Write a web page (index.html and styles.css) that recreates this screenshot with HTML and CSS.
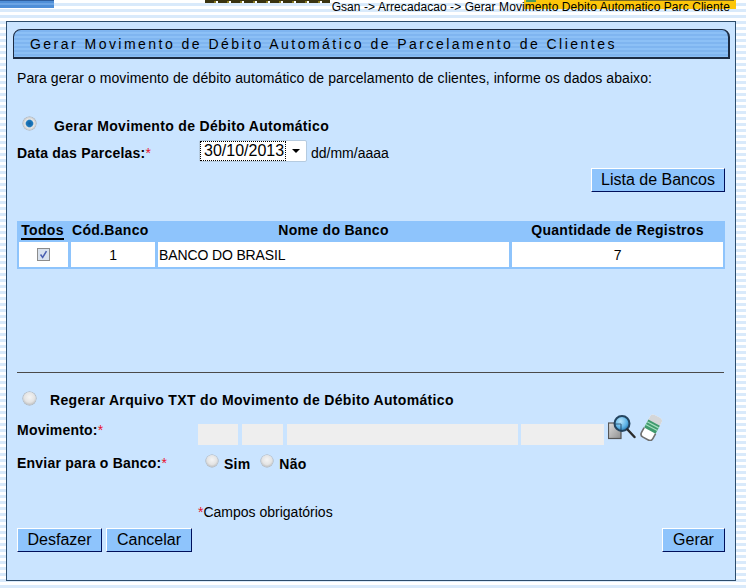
FILE: index.html
```html
<!DOCTYPE html>
<html lang="pt-BR">
<head>
<meta charset="utf-8">
<title>Gerar Movimento de Débito Automático</title>
<link rel="stylesheet" href="styles.css">
</head>
<body>
<header class="top">
  <div class="top-blue"></div>
  <div class="top-logo"></div>
  <div class="top-yellow"><span class="top-green"></span><span class="top-scribble"></span></div>
  <div class="crumb">Gsan -&gt; Arrecadacao -&gt; Gerar Movimento Debito Automatico Parc Cliente</div>
</header>
<main class="panel">
  <h1 class="title">Gerar Movimento de Débito Automático de Parcelamento de Clientes</h1>
  <p class="intro">Para gerar o movimento de débito automático de parcelamento de clientes, informe os dados abaixo:</p>

  <div class="option option-first">
    <input class="radio" type="radio" name="modo" checked>
    <strong>Gerar Movimento de Débito Automático</strong>
  </div>
  <div class="date-row">
    <label class="lbl">Data das Parcelas:<span class="req">*</span></label>
    <div class="select"><span class="select-value">30/10/2013</span><span class="caret"></span></div>
    <span class="hint">dd/mm/aaaa</span>
  </div>
  <div class="list-row"><button class="btn btn-list" type="button">Lista de Bancos</button></div>

  <div class="grid">
    <div class="th th-todos"><span class="todos">Todos</span></div>
    <div class="th th-cod">Cód.Banco</div>
    <div class="th">Nome do Banco</div>
    <div class="th">Quantidade de Registros</div>
    <div class="td td-c"><span class="check"><svg width="13" height="13" viewBox="0 0 13 13"><path d="M3 6.5 5.5 10 10 2.5" fill="none" stroke="#4a5fb0" stroke-width="1.8"/></svg></span></div>
    <div class="td td-c">1</div>
    <div class="td">BANCO DO BRASIL</div>
    <div class="td td-c">7</div>
  </div>

  <hr class="rule">

  <div class="option option-second">
    <input class="radio" type="radio" name="modo">
    <strong>Regerar Arquivo TXT do Movimento de Débito Automático</strong>
  </div>
  <div class="mov-row">
    <label class="lbl lbl-mov">Movimento:<span class="req">*</span></label>
    <div class="fields">
      <span class="field f1"></span><span class="field f2"></span><span class="field f3"></span><span class="field f4"></span>
    </div>
    <svg class="icon-search" width="28" height="26" viewBox="0 0 28 26">
      <defs><radialGradient id="lens" cx=".4" cy=".35" r=".7"><stop offset="0" stop-color="#b8e4fa"/><stop offset=".6" stop-color="#5fb4e6"/><stop offset="1" stop-color="#1f6fa8"/></radialGradient>
      <linearGradient id="page" x1="0" y1="0" x2="1" y2="1"><stop offset="0" stop-color="#ddd"/><stop offset="1" stop-color="#8f8f8f"/></linearGradient></defs>
      <rect x="0.5" y="9" width="12.5" height="15.5" fill="url(#page)" stroke="#555" stroke-width="1.2"/>
      <circle cx="14" cy="9.5" r="7.5" fill="url(#lens)" stroke="#24445f" stroke-width="2"/>
      <path d="M13 10 V17 M7 10 H13" stroke="#1d3c58" stroke-width="1.2" opacity=".7"/>
      <path d="M19.5 15.5 26.5 23" stroke="#2b2b2b" stroke-width="2.4" stroke-linecap="round"/>
    </svg>
    <svg class="icon-eraser" width="25" height="27" viewBox="0 0 25 27">
      <g transform="rotate(28 12.5 13.5)">
        <rect x="6" y="1" width="13" height="25" rx="3.5" fill="#fff"/>
        <path d="M6 9V4.5Q6 1 9.5 1h6Q19 1 19 4.5V9Z" fill="#d4d6d8"/>
        <rect x="6" y="8" width="13" height="9" fill="#3f9a6e"/>
        <path d="M6 10.5H19M6 13.5H19" stroke="#a6e0bf" stroke-width="1.2"/>
        <path d="M6 17V22.5Q6 26 9.5 26h6Q19 26 19 22.5V17" fill="none" stroke="#6f6f6f" stroke-width="1.6"/>
      </g>
    </svg>
  </div>
  <div class="send-row">
    <label class="lbl lbl-send">Enviar para o Banco:<span class="req">*</span></label>
    <input class="radio radio-sm" type="radio" name="env"><strong class="opt-sim">Sim</strong>
    <input class="radio radio-sm" type="radio" name="env"><strong>Não</strong>
  </div>
  <p class="required"><span class="req">*</span>Campos obrigatórios</p>
  <div class="actions">
    <button class="btn btn-undo" type="button">Desfazer</button>
    <button class="btn btn-cancel" type="button">Cancelar</button>
    <button class="btn btn-end" type="button">Gerar</button>
  </div>
</main>
</body>
</html>
```
FILE: styles.css
```css
* { box-sizing: border-box; }
html, body { margin: 0; padding: 0; }
body {
  width: 746px;
  height: 588px;
  overflow: hidden;
  font-family: "Liberation Sans", Arial, sans-serif;
  font-size: 14px;
  color: #000;
  background: repeating-linear-gradient(to bottom, #fff 0, #fff 3px, #d9eafb 3px, #d9eafb 6px);
}
.top { position: relative; height: 21px; }
.top-blue { position: absolute; left: 0; top: 0; width: 54px; height: 8px; background: linear-gradient(to bottom, #2f5f9f 0, #2f5f9f 1px, #4f8fd8 1px, #4f8fd8 3px, #6ba4e4 3px, #6ba4e4 5px, #4f8fd8 5px); }
.top-logo { position: absolute; left: 205px; top: 0; width: 125px; height: 3px; background: repeating-linear-gradient(to right, #3a3310 0, #3a3310 9px, #8a7a20 9px, #8a7a20 11px, transparent 11px, transparent 13px); border-top: 1px solid #3a3310; }
.top-yellow { position: absolute; left: 524px; top: 0; width: 212px; height: 9px; background: #fdc60a; }
.top-green { position: absolute; left: 2px; top: 0; width: 10px; height: 2px; background: #4f9a5a; }
.top-scribble { position: absolute; left: 66px; top: 0; width: 144px; height: 1px; background: #7c6a20; }
.crumb { position: absolute; right: 16px; top: 1px; font-size: 12px; line-height: 12px; letter-spacing: .07px; white-space: nowrap; }
.panel {
  margin-left: 6px;
  width: 730px;
  height: 560px;
  background: #cae4ff;
  border: 1px solid #2c4c6c;
  padding: 7px 10px 0 10px;
}
.title {
  margin: 0 0 0 -4px;
  width: 717px;
  height: 30px;
  padding-left: 16px;
  font-size: 14px;
  font-weight: normal;
  line-height: 29px;
  letter-spacing: 2.47px;
  color: #000;
  border: 1px solid #1c2c44;
  border-width: 1px 2px 2px 1px;
  border-radius: 8px 8px 0 0;
  background: repeating-linear-gradient(to bottom, #7fb5f0 0, #7fb5f0 2px, #8cc0f6 2px, #8cc0f6 4px);
}
.intro { margin: 11px 0 0 0; line-height: 16px; letter-spacing: .08px; }
.option { display: flex; align-items: center; font-weight: bold; letter-spacing: .33px; }
.option-first { margin: 30px 0 0 6px; height: 20px; }
.option-first strong { margin-left: 18px; }
.option-first .radio { margin-top: -6px; }
.radio {
  appearance: none;
  flex: none;
  margin: 0;
  width: 13px;
  height: 13px;
  border-radius: 50%;
  background: radial-gradient(circle at 50% 40%, #f4f4f4 0, #e4e4e4 50%, #9f9f9f 100%);
  box-shadow: 0 0 0 .5px #aaa;
}
.radio:checked { background: radial-gradient(circle, #125f9f 0, #1b78bd 34%, #e8e8e8 48%, #a0a0a0 100%); }
.date-row { display: flex; align-items: center; margin-top: 6px; height: 22px; }
.lbl { font-weight: bold; letter-spacing: .22px; }
.date-row .lbl { width: 182px; }
.req { color: #e8132c; font-weight: normal; }
.select {
  display: flex;
  align-items: center;
  align-self: flex-start;
  width: 108px;
  height: 22px;
  margin-top: -2px;
  padding: 1px;
  background: #fff;
  border-radius: 2px;
  border: 1px solid #b5cbe0;
}
.select-value { font-size: 16px; line-height: 18px; padding: 0 1px 0 3px; outline: 1px dotted #000; width: 84px; }
.caret { margin-left: 7px; border: 4px solid transparent; border-top: 4px solid #000; border-bottom: 0; }
.hint { margin-left: 4px; font-size: 14px; }
.list-row { display: flex; justify-content: flex-end; margin-top: 4px; }
.btn {
  height: 24px;
  padding: 0;
  margin: 0;
  font-family: inherit;
  font-size: 16px;
  line-height: 20px;
  white-space: nowrap;
  color: #000;
  background: #8ec4fc;
  border: 1px solid;
  border-color: #fff #00105c #00105c #fff;
}
.btn-list { width: 134px; }
.btn-undo { width: 85px; }
.btn-cancel { width: 86px; }
.grid {
  display: grid;
  grid-template-columns: 49px 84px 351px 211px;
  column-gap: 3px;
  row-gap: 1px;
  width: 708px;
  margin: 29px 0 0 0;
  padding: 0 2px 2px;
  background: #8ec4fc;
}
.th { height: 20px; line-height: 19px; font-weight: bold; text-align: center; letter-spacing: .3px; }
.th-todos { padding-right: 2px; }
.th-cod { text-align: left; padding-left: 1px; }
.todos { border-bottom: 2px solid #000; display: inline-block; line-height: 16px; }
.td { height: 25px; line-height: 25px; background: #fff; padding: 1px 0 0 1px; letter-spacing: -.13px; }
.td-c { text-align: center; padding: 1px 0 0 0; display: flex; align-items: center; justify-content: center; }
.check { width: 13px; height: 13px; margin-top: -1px; border: 1px solid #8c8c8c; background: #d9e2ee; display: flex; align-items: center; justify-content: center; }
.rule { margin: 103px 0 0 0; width: 707px; height: 1px; border: 0; background: #4a4a4a; }
.option-second { margin: 17px 0 0 6px; height: 20px; }
.option-second strong { margin-left: 14px; }
.option-second .radio { margin-top: -4px; }
.mov-row { display: flex; align-items: flex-start; height: 31px; margin-top: 12px; }
.lbl-mov { width: 181px; }
.fields { display: flex; gap: 4px; margin-top: 2px; }
.field { height: 21px; background: #eee; display: block; }
.f1 { width: 40px; }
.f2 { width: 41px; }
.f3 { width: 231px; }
.f4 { width: 83px; margin-left: -1px; }
.icon-search { margin: -8px 0 0 4px; }
.icon-eraser { margin: -8px 0 0 3px; }
.send-row { display: flex; align-items: center; height: 20px; font-weight: bold; letter-spacing: .22px; }
.lbl-send { width: 189px; }
.radio-sm { margin-top: -4px; width: 12px; height: 12px; }
.send-row strong { margin: 2px 0 0 6px; }
.send-row .opt-sim { margin-right: 11px; }
.required { margin: 31px 0 0 181px; line-height: 16px; }
.actions { display: flex; gap: 4px; margin-top: 8px; }
.btn-end { margin-left: auto; width: 63px; }
```
